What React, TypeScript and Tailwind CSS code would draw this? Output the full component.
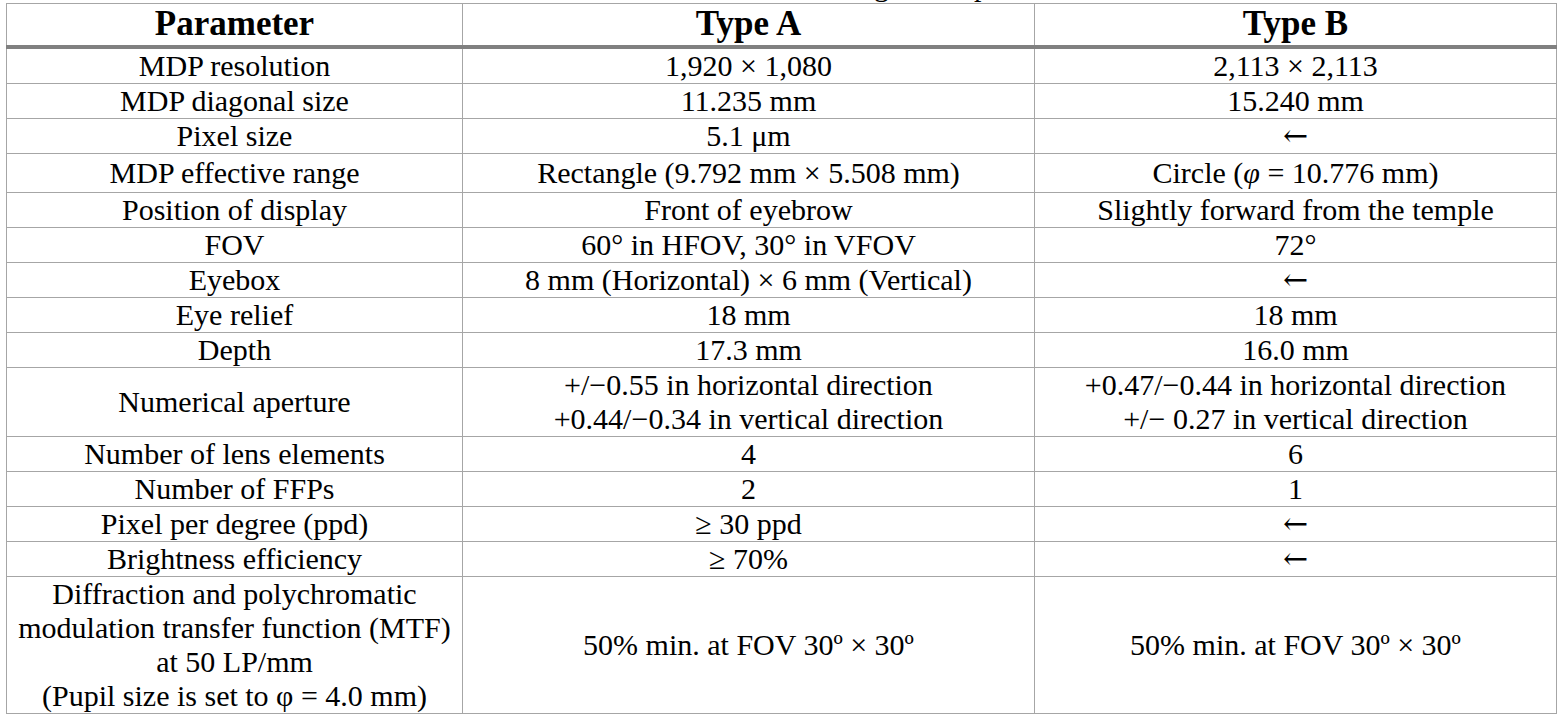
import React from "react";

type Row = {
  param: React.ReactNode;
  a: React.ReactNode;
  b: React.ReactNode;
  tall?: boolean;
};

// same-as-left marker, drawn in a font with a wide arrow glyph
const Same = () => <span className="font-['DejaVu_Serif',_serif] text-[30px]">←</span>;

const ROWS: Row[] = [
  { param: "MDP resolution", a: "1,920 × 1,080", b: "2,113 × 2,113" },
  { param: "MDP diagonal size", a: "11.235 mm", b: "15.240 mm" },
  { param: "Pixel size", a: "5.1 μm", b: <Same /> },
  {
    param: "MDP effective range",
    a: "Rectangle (9.792 mm × 5.508 mm)",
    b: (
      <>
        Circle (<i>φ</i> = 10.776 mm)
      </>
    ),
    tall: true,
  },
  { param: "Position of display", a: "Front of eyebrow", b: "Slightly forward from the temple" },
  { param: "FOV", a: "60° in HFOV, 30° in VFOV", b: "72°" },
  { param: "Eyebox", a: "8 mm (Horizontal) × 6 mm (Vertical)", b: <Same /> },
  { param: "Eye relief", a: "18 mm", b: "18 mm" },
  { param: "Depth", a: "17.3 mm", b: "16.0 mm" },
  {
    param: "Numerical aperture",
    a: (
      <>
        +/−0.55 in horizontal direction
        <br />
        +0.44/−0.34 in vertical direction
      </>
    ),
    b: (
      <>
        +0.47/−0.44 in horizontal direction
        <br />
        +/− 0.27 in vertical direction
      </>
    ),
  },
  { param: "Number of lens elements", a: "4", b: "6" },
  { param: "Number of FFPs", a: "2", b: "1" },
  { param: "Pixel per degree (ppd)", a: "≥ 30 ppd", b: <Same /> },
  { param: "Brightness efficiency", a: "≥ 70%", b: <Same /> },
  {
    param: (
      <>
        Diffraction and polychromatic
        <br />
        modulation transfer function (MTF)
        <br />
        at 50 LP/mm
        <br />
        (Pupil size is set to φ = 4.0 mm)
      </>
    ),
    a: "50% min. at FOV 30º × 30º",
    b: "50% min. at FOV 30º × 30º",
  },
];

export default function App() {
  return (
    <div className="min-h-[718px] bg-white font-['Liberation_Serif',_'Times_New_Roman',_serif] text-black">
      {/* caption above the table, only its descenders show */}
      <div className="-mt-[31px] h-[34px] overflow-hidden pl-[819px] text-[30px] leading-[34px]">
        Design and specifications
      </div>
      <div className="pl-[6px]">
        <table className="w-[1550px] table-fixed border-collapse border border-[#a6a6a6]">
          <colgroup>
            <col className="w-[456px]" />
            <col className="w-[572px]" />
            <col className="w-[522px]" />
          </colgroup>
          <thead>
            <tr className="h-[43px] border-b-4 border-b-[#808080]">
              {["Parameter", "Type A", "Type B"].map((h) => (
                <th
                  key={h}
                  className="border-x border-[#a6a6a6] p-0 text-center align-middle text-[35px] font-bold leading-[40px]"
                >
                  {h}
                </th>
              ))}
            </tr>
          </thead>
          <tbody>
            {ROWS.map((r, i) => (
              <tr key={i} className="border-t border-[#a6a6a6]">
                {[r.param, r.a, r.b].map((c, j) => (
                  <td
                    key={j}
                    className={`border-x border-[#a6a6a6] p-0 text-center align-middle text-[30px] leading-[34px] ${
                      r.tall ? "py-[2px]" : ""
                    }`}
                  >
                    {c}
                  </td>
                ))}
              </tr>
            ))}
          </tbody>
        </table>
      </div>
    </div>
  );
}
